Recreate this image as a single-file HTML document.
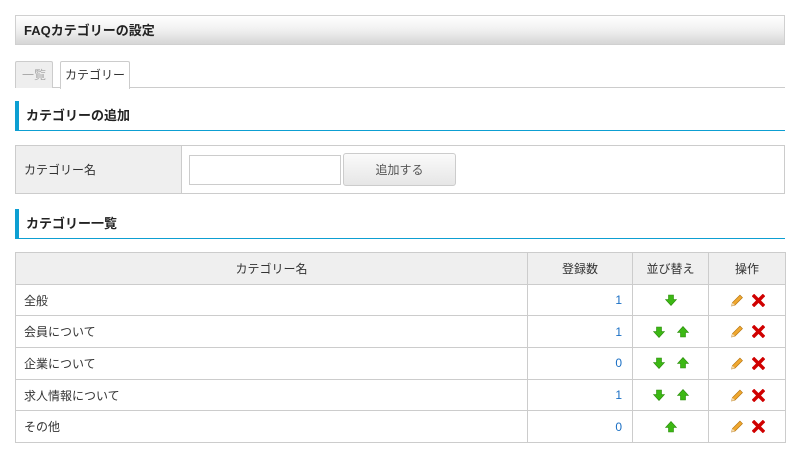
<!DOCTYPE html>
<html><head><meta charset="utf-8"><style>
*{margin:0;padding:0;box-sizing:border-box}
body{width:800px;height:460px;background:#fff;font-family:"Liberation Sans","Noto Sans CJK JP",sans-serif;font-size:12px;color:#333;position:relative;overflow:hidden}
.a{position:absolute}
.hdr{left:15px;top:15px;width:770px;height:30px;border:1px solid #d0d0d0;background:linear-gradient(#fff,#f0f0f0 50%,#d6d6d6);font-weight:bold;font-size:13px;line-height:29px;padding-left:8px;color:#222}
.tab{top:61px;height:27px;border:1px solid #ccc;border-bottom:none;line-height:26px;text-align:center;border-radius:2px 2px 0 0}
.sec{left:15px;width:770px;height:30px;border-left:4px solid #0d9fd2;border-bottom:1px solid #0d9fd2;font-weight:bold;font-size:13px;line-height:29px;padding-left:7px;color:#222}
table{border-collapse:collapse;position:absolute;left:15px;top:252px;width:770px;table-layout:fixed}
td,th{border:1px solid #ccc;height:31.7px;font-weight:normal;padding:0 8px}
th{background:#efefef;text-align:center}
td.n{text-align:right;color:#1a6fc4;padding-right:10px}
td.c{text-align:center;font-size:0;padding:0}
svg{vertical-align:middle}
.g{display:inline-block;width:12px}
.g2{display:inline-block;width:9px}
</style></head><body>
<div class="a hdr">FAQカテゴリーの設定</div>
<div class="a" style="left:15px;top:87px;width:770px;height:1px;background:#ccc"></div>
<div class="a tab" style="left:15px;width:38px;background:#eee;color:#aaa">一覧</div>
<div class="a tab" style="left:60px;width:70px;background:#fff;height:28px">カテゴリー</div>
<div class="a sec" style="top:101px">カテゴリーの追加</div>
<div class="a" style="left:15px;top:145px;width:770px;height:49px;border:1px solid #ccc"></div>
<div class="a" style="left:16px;top:146px;width:166px;height:47px;background:#efefef;border-right:1px solid #ccc;line-height:49px;padding-left:8px">カテゴリー名</div>
<div class="a" style="left:189px;top:155px;width:152px;height:30px;border:1px solid #ccc;background:#fff"></div>
<div class="a" style="left:343px;top:153px;width:113px;height:33px;border:1px solid #ccc;border-radius:3px;background:linear-gradient(#fafafa,#e6e6e6);text-align:center;line-height:33px;color:#555">追加する</div>
<div class="a sec" style="top:209px">カテゴリー一覧</div>
<svg width="0" height="0" style="position:absolute"><defs>
<symbol id="dn" viewBox="0 0 12 12"><path d="M3.5 1h5v4.5h3L6 11.5 0.5 5.5h3z" fill="#3cb814" stroke="#2a8a0c" stroke-width=".6"/></symbol>
<symbol id="up" viewBox="0 0 12 12"><path d="M3.5 11h5V6.5h3L6 0.5 0.5 6.5h3z" fill="#3cb814" stroke="#2a8a0c" stroke-width=".6"/></symbol>
<symbol id="pe" viewBox="0 0 12 12"><path d="M1.5 11l0.7-3 7-7 2.3 2.3-7 7z" fill="#f0a830" stroke="#b57410" stroke-width=".6"/><path d="M1.5 11l0.7-3 2.3 2.3z" fill="#f5dcb0"/></symbol>
<symbol id="x" viewBox="0 0 12 12"><path d="M2 2L10 10M10 2L2 10" stroke="#d00000" stroke-width="3.2" stroke-linecap="square"/></symbol>
</defs></svg>
<table>
<colgroup><col style="width:512px"><col style="width:105px"><col style="width:76px"><col style="width:77px"></colgroup>
<tr><th>カテゴリー名</th><th>登録数</th><th>並び替え</th><th>操作</th></tr>
<tr><td>全般</td><td class="n">1</td><td class="c"><svg width="12" height="12"><use href="#dn"/></svg></td><td class="c"><svg width="13" height="13"><use href="#pe"/></svg><span class="g2"></span><svg width="13" height="13"><use href="#x"/></svg></td></tr>
<tr><td>会員について</td><td class="n">1</td><td class="c"><svg width="12" height="12"><use href="#dn"/></svg><span class="g"></span><svg width="12" height="12"><use href="#up"/></svg></td><td class="c"><svg width="13" height="13"><use href="#pe"/></svg><span class="g2"></span><svg width="13" height="13"><use href="#x"/></svg></td></tr>
<tr><td>企業について</td><td class="n">0</td><td class="c"><svg width="12" height="12"><use href="#dn"/></svg><span class="g"></span><svg width="12" height="12"><use href="#up"/></svg></td><td class="c"><svg width="13" height="13"><use href="#pe"/></svg><span class="g2"></span><svg width="13" height="13"><use href="#x"/></svg></td></tr>
<tr><td>求人情報について</td><td class="n">1</td><td class="c"><svg width="12" height="12"><use href="#dn"/></svg><span class="g"></span><svg width="12" height="12"><use href="#up"/></svg></td><td class="c"><svg width="13" height="13"><use href="#pe"/></svg><span class="g2"></span><svg width="13" height="13"><use href="#x"/></svg></td></tr>
<tr><td>その他</td><td class="n">0</td><td class="c"><svg width="12" height="12"><use href="#up"/></svg></td><td class="c"><svg width="13" height="13"><use href="#pe"/></svg><span class="g2"></span><svg width="13" height="13"><use href="#x"/></svg></td></tr>
</table>
</body></html>
